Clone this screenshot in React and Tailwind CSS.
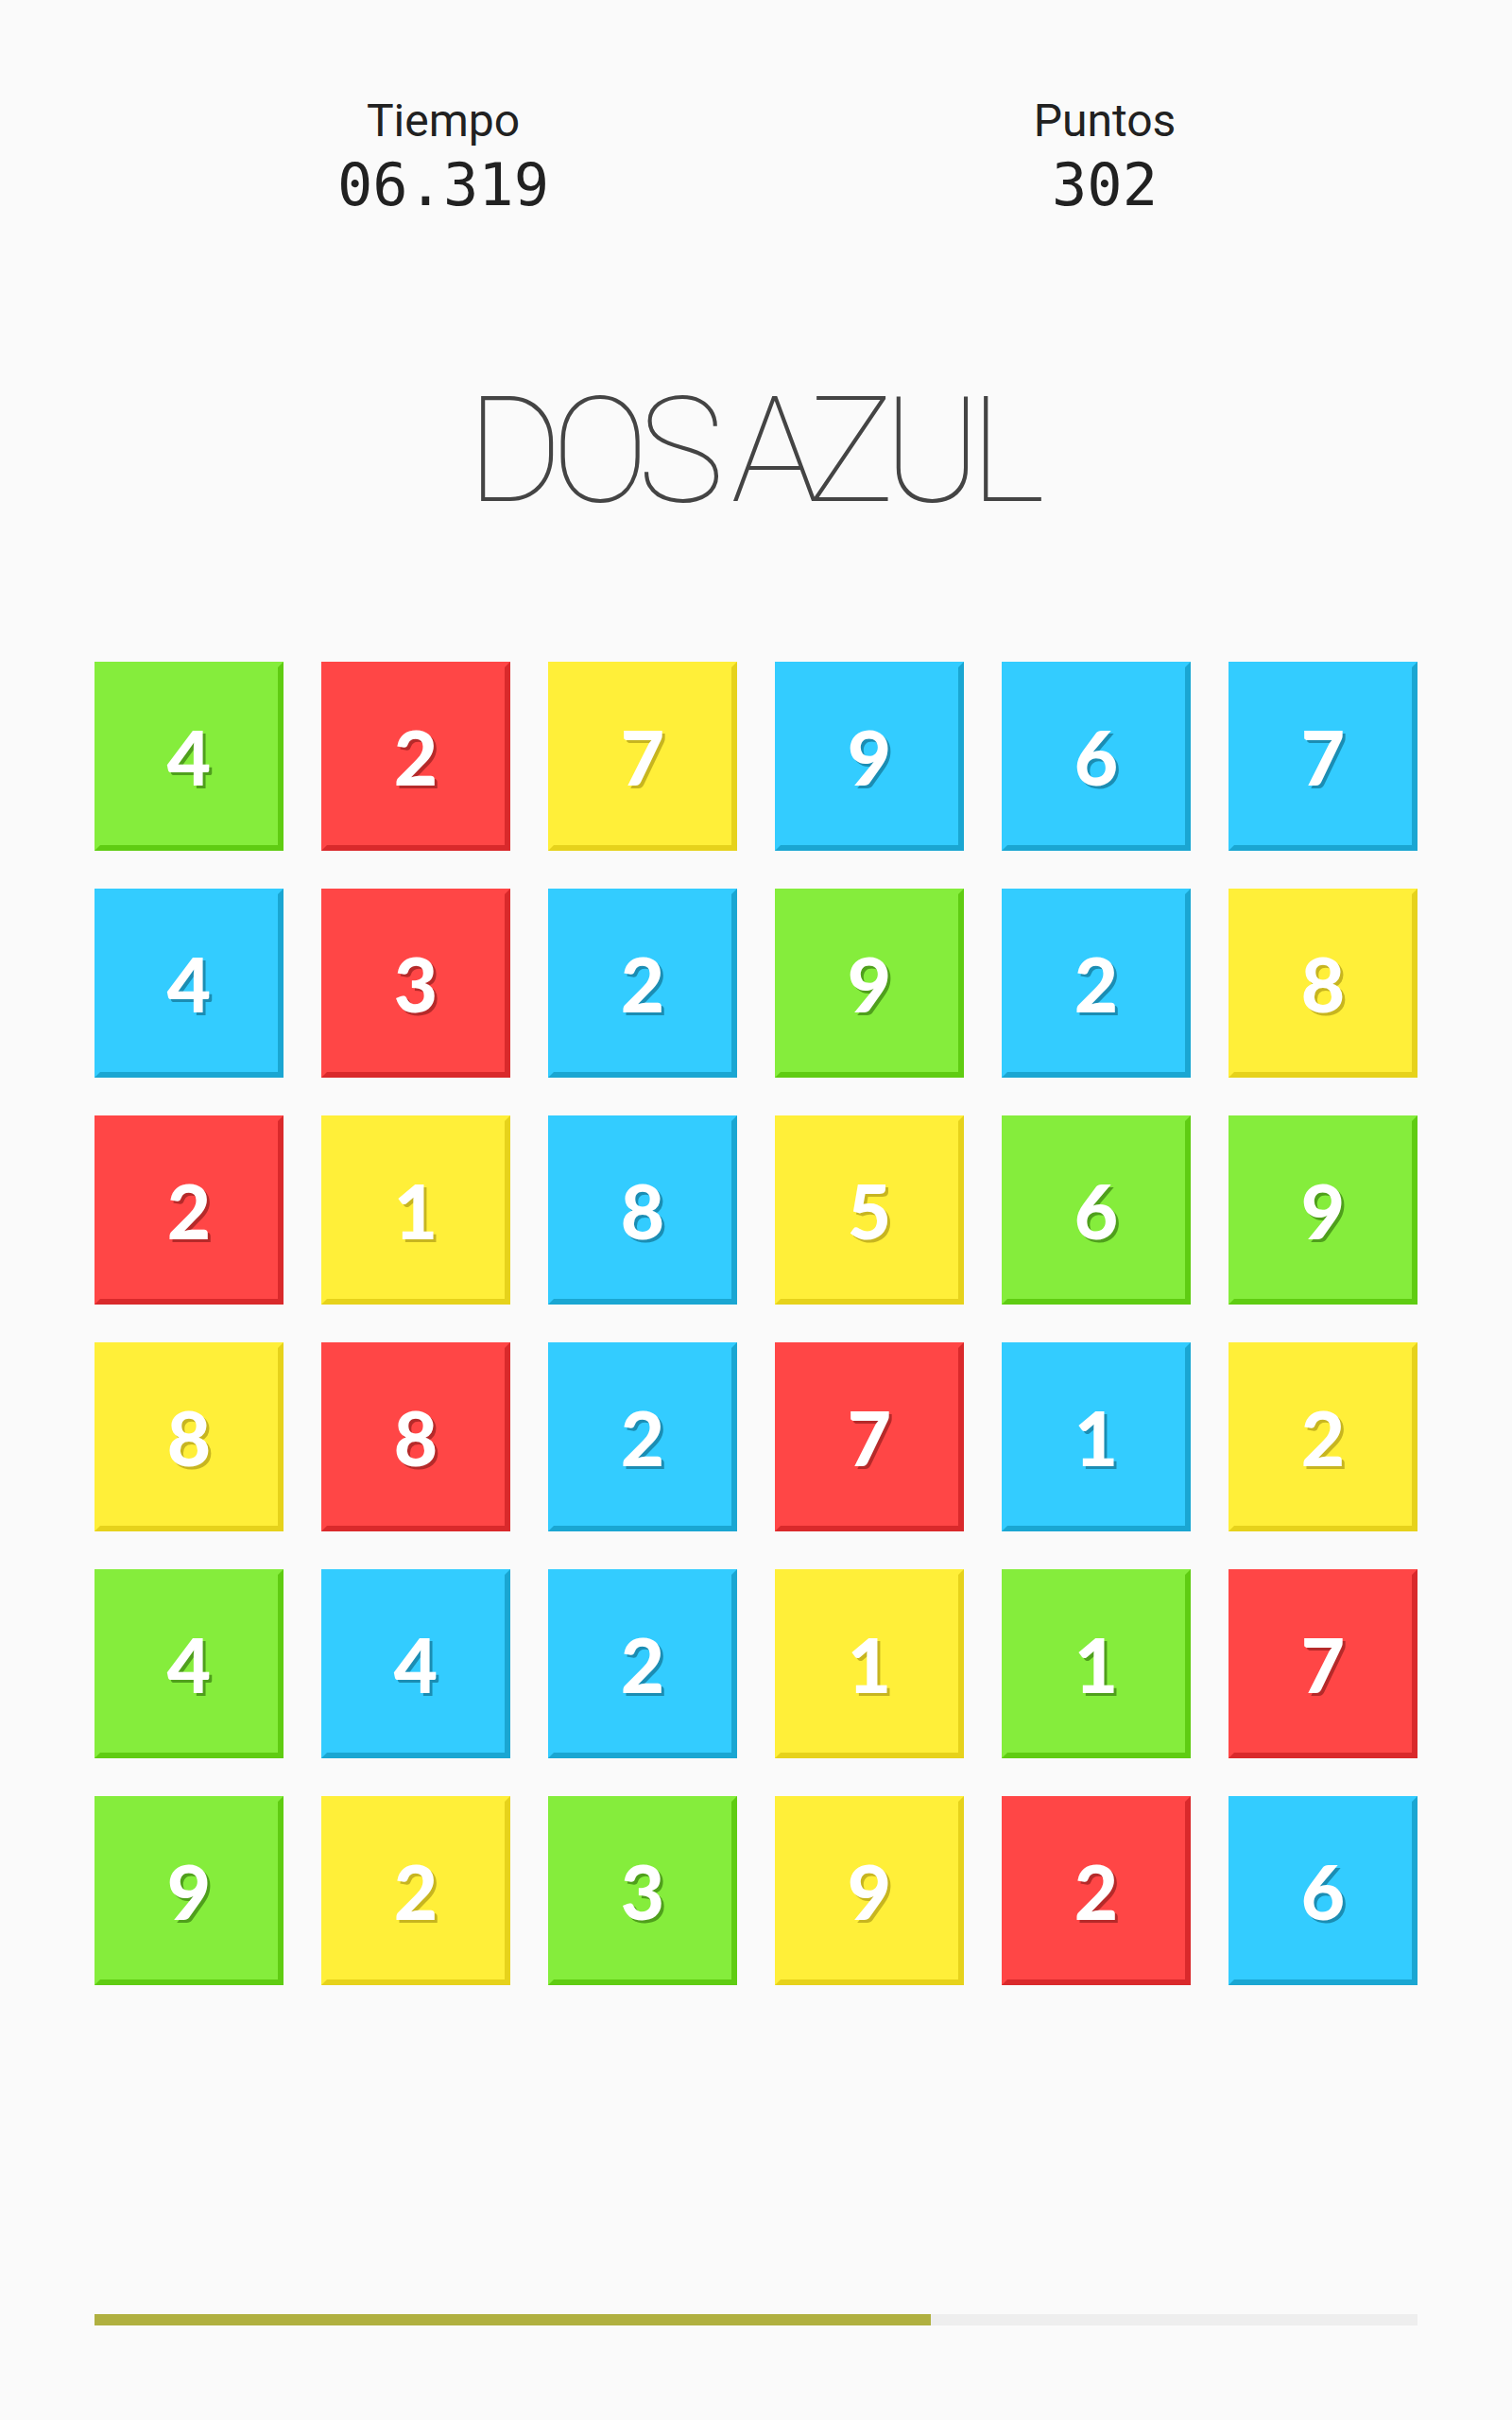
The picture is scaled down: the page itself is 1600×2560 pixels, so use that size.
import React from 'react';

const TILE_STYLES = {
  G: 'bg-[#85ed3c] border-t-[#85ed3c] border-l-[#85ed3c] border-r-[#5fcc12] border-b-[#5fcc12] [text-shadow:3px_3px_0_#4f9f1c]',
  R: 'bg-[#ff4646] border-t-[#ff4646] border-l-[#ff4646] border-r-[#d9292b] border-b-[#d9292b] [text-shadow:3px_3px_0_#b52a2a]',
  Y: 'bg-[#ffef39] border-t-[#ffef39] border-l-[#ffef39] border-r-[#e6d21b] border-b-[#e6d21b] [text-shadow:3px_3px_0_#c7b520]',
  B: 'bg-[#33ccff] border-t-[#33ccff] border-l-[#33ccff] border-r-[#1aa6d2] border-b-[#1aa6d2] [text-shadow:3px_3px_0_#1b8db3]',
};

const board = [
  ['4G', '2R', '7Y', '9B', '6B', '7B'],
  ['4B', '3R', '2B', '9G', '2B', '8Y'],
  ['2R', '1Y', '8B', '5Y', '6G', '9G'],
  ['8Y', '8R', '2B', '7R', '1B', '2Y'],
  ['4G', '4B', '2B', '1Y', '1G', '7R'],
  ['9G', '2Y', '3G', '9Y', '2R', '6B'],
];

const Tile = ({ value, color }) => (
  <div
    className={`w-[200px] h-[200px] border-[6px] flex items-center justify-center text-white text-[80px] leading-none font-black font-['Lato',sans-serif] ${TILE_STYLES[color]}`}
  >
    {value}
  </div>
);

const Stat = ({ label, value }) => (
  <div className="flex flex-col items-center">
    <span className="text-[48px] leading-none text-[#212121] font-['Roboto',sans-serif]">{label}</span>
    <span className="mt-[13px] text-[62px] leading-none text-[#212121] font-['DejaVu_Sans_Mono',monospace]">
      {value}
    </span>
  </div>
);

const App = () => {
  const progress = 0.632;

  return (
    <div className="min-h-screen bg-[#fafafa] flex flex-col">
      <div className="pt-[104px] ml-[119px] w-[1400px] grid grid-cols-2">
        <Stat label="Tiempo" value="06.319" />
        <Stat label="Puntos" value="302" />
      </div>

      <h1 className="mt-[173px] pr-[12px] text-center text-[155px] leading-none font-thin tracking-[-12px] [word-spacing:-6px] text-[#444444] font-['Roboto',sans-serif]">
        DOS AZUL
      </h1>

      <div className="mt-[145px] mx-[100px] grid grid-cols-6 gap-[40px]">
        {board.flat().map((cell, i) => (
          <Tile key={i} value={cell[0]} color={cell[1]} />
        ))}
      </div>

      <div className="mt-[348px] mx-[100px] h-[12px] bg-[#eeeeee]">
        <div className="h-full bg-[#b0b040]" style={{ width: `${progress * 100}%` }} />
      </div>
    </div>
  );
};

export default App;
